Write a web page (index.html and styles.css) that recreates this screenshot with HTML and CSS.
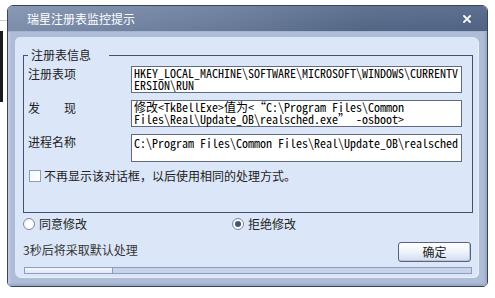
FILE: index.html
```html
<!DOCTYPE html>
<html lang="zh-CN">
<head>
<meta charset="utf-8">
<title>瑞星注册表监控提示</title>
<link rel="stylesheet" href="styles.css">
</head>
<body>
<div class="window">
  <div class="titlebar">
    <span class="title">瑞星注册表监控提示</span>
    <svg class="close" width="8" height="8" viewBox="0 0 8 8"><path d="M1 1L7 7M7 1L1 7" stroke="#fff" stroke-width="1.8" stroke-linecap="square"/></svg>
  </div>
  <div class="frame">
    <div class="panel">
      <fieldset class="group">
        <legend>注册表信息</legend>
        <div class="row">
          <span class="label">注册表项</span>
          <div class="box">HKEY_LOCAL_MACHINE\SOFTWARE\MICROSOFT\WINDOWS\CURRENTV<br>ERSION\RUN</div>
        </div>
        <div class="row">
          <span class="label">发　　现</span>
          <div class="box">修改&lt;TkBellExe&gt;值为&lt;“C:\Program Files\Common<br>Files\Real\Update_OB\realsched.exe” -osboot&gt;</div>
        </div>
        <div class="row">
          <span class="label">进程名称</span>
          <div class="box box-tall"><span class="clip">C:\Program Files\Common Files\Real\Update_OB\realsched.exe</span></div>
        </div>
        <div class="check"><span class="checkbox"></span>不再显示该对话框，以后使用相同的处理方式。</div>
      </fieldset>
      <div class="choices">
        <div class="opt"><span class="radio"></span>同意修改</div>
        <div class="opt"><span class="radio radio-on"></span>拒绝修改</div>
      </div>
      <div class="footer">
        <span class="countdown">3秒后将采取默认处理</span>
        <button class="btn">确定</button>
      </div>
      <div class="progress"><div class="fill" style="width:88px"></div></div>
    </div>
  </div>
</div>
</body>
</html>
```
FILE: styles.css
```css
html, body {
  margin: 0;
}
body {
  width: 495px;
  height: 298px;
  overflow: hidden;
  background:
    linear-gradient(#1b1b1b, #1b1b1b) 0 31px / 3px 71px no-repeat,
    linear-gradient(#cfcfcf, #cfcfcf) 0 20px / 7px 1px no-repeat,
    #fff;
  font-family: "Noto Sans CJK SC", sans-serif;
  font-size: 12px;
  line-height: 14px;
  color: #222;
}
.window {
  width: 481px;
  box-sizing: border-box;
  margin: 5px 0 0 7px;
  border: 1px solid #3b4558;
  border-radius: 6px 6px 5px 5px;
  overflow: hidden;
}
.titlebar {
  height: 25px;
  display: flex;
  align-items: center;
  justify-content: space-between;
  padding: 0 16px 0 19px;
  background:
    linear-gradient(rgba(255,255,255,0.06), rgba(0,0,0,0.04)),
    linear-gradient(to right, #8193b1, #6b7e9d 45%, #566a8a 75%, #53678a);
  color: #fff;
}
.title {
  font-size: 12px;
  line-height: 14px;
  color: #fff;
}
.close {
  display: block;
}
.frame {
  padding: 6px 9px 9px 7px;
  background: #aebcd7;
  box-shadow: inset 0 1px 0 #a4b3cf, inset -2px -2px 2px #97a8c6, inset 2px 0 2px #c2cde1;
}
.panel {
  background: #dbe7f8;
  border-radius: 5px;
  padding: 11px 5px 3px 8px;
  box-shadow: 1px 1px 0 #e9f0fa;
}
.group {
  margin: 0;
  min-width: 0;
  border: 1px solid #41516e;
  padding: 4px 10px 29px 4px;
}
.group legend {
  padding: 0 18px 0 3px;
  font-size: 12px;
  line-height: 14px;
  color: #222;
}
.row {
  display: flex;
  align-items: flex-start;
}
.row + .row {
  margin-top: 7px;
}
.label {
  flex: none;
  width: 103px;
  margin-top: 1px;
  white-space: pre;
}
.box {
  flex: none;
  width: 331px;
  height: 27px;
  box-sizing: border-box;
  border: 1px solid #5e6b81;
  background: #fff;
  padding: 0 3px 0 2px;
  font-family: "Noto Sans Mono CJK SC", "Liberation Mono", monospace;
  font-size: 12px;
  line-height: 12px;
  color: #000;
  white-space: nowrap;
}
.box-tall {
  height: 28px;
}
.clip {
  display: block;
  overflow: hidden;
  padding: 2px 0 3px;
}
.check {
  display: flex;
  align-items: center;
  height: 14px;
  margin-top: 7px;
}
.checkbox {
  flex: none;
  width: 12px;
  height: 12px;
  box-sizing: border-box;
  margin: 0 3px 0 1px;
  border: 1px solid #8e9cb5;
  background: linear-gradient(135deg, #f4f6fa, #ffffff);
}
.choices {
  display: grid;
  grid-template-columns: 209px auto;
  height: 14px;
  margin-top: 4px;
}
.opt {
  display: flex;
  align-items: center;
  gap: 4px;
}
.radio {
  flex: none;
  width: 12px;
  height: 12px;
  box-sizing: border-box;
  border-radius: 50%;
  border: 1px solid #7c899f;
  background: radial-gradient(circle at 60% 60%, #ffffff 40%, #e6ebf3);
  display: flex;
  align-items: center;
  justify-content: center;
}
.radio-on::after {
  content: "";
  width: 6px;
  height: 6px;
  border-radius: 50%;
  background: #3f5780;
}
.footer {
  display: flex;
  justify-content: space-between;
  align-items: flex-start;
  margin: 11px 2px 0 0;
}
.countdown {
  margin-top: 1px;
  color: #333;
}
.btn {
  width: 73px;
  height: 20px;
  padding: 0;
  border: 1px solid #56647c;
  border-radius: 3px;
  background: linear-gradient(#ffffff, #eef3fb 50%, #d2ddef);
  box-shadow: inset -1px -1px 0 #b6c3da;
  font-family: "Noto Sans CJK SC", sans-serif;
  font-size: 12px;
  line-height: 14px;
  color: #222;
}
.progress {
  height: 7px;
  box-sizing: border-box;
  margin: 5px 1px 0 1px;
  border: 1px solid #8d9dba;
  background: #c6d3ea;
}
.fill {
  height: 100%;
  box-sizing: border-box;
  border-right: 1px solid #8d9dba;
  background: linear-gradient(#f6f9fe, #dce6f6);
}
```
